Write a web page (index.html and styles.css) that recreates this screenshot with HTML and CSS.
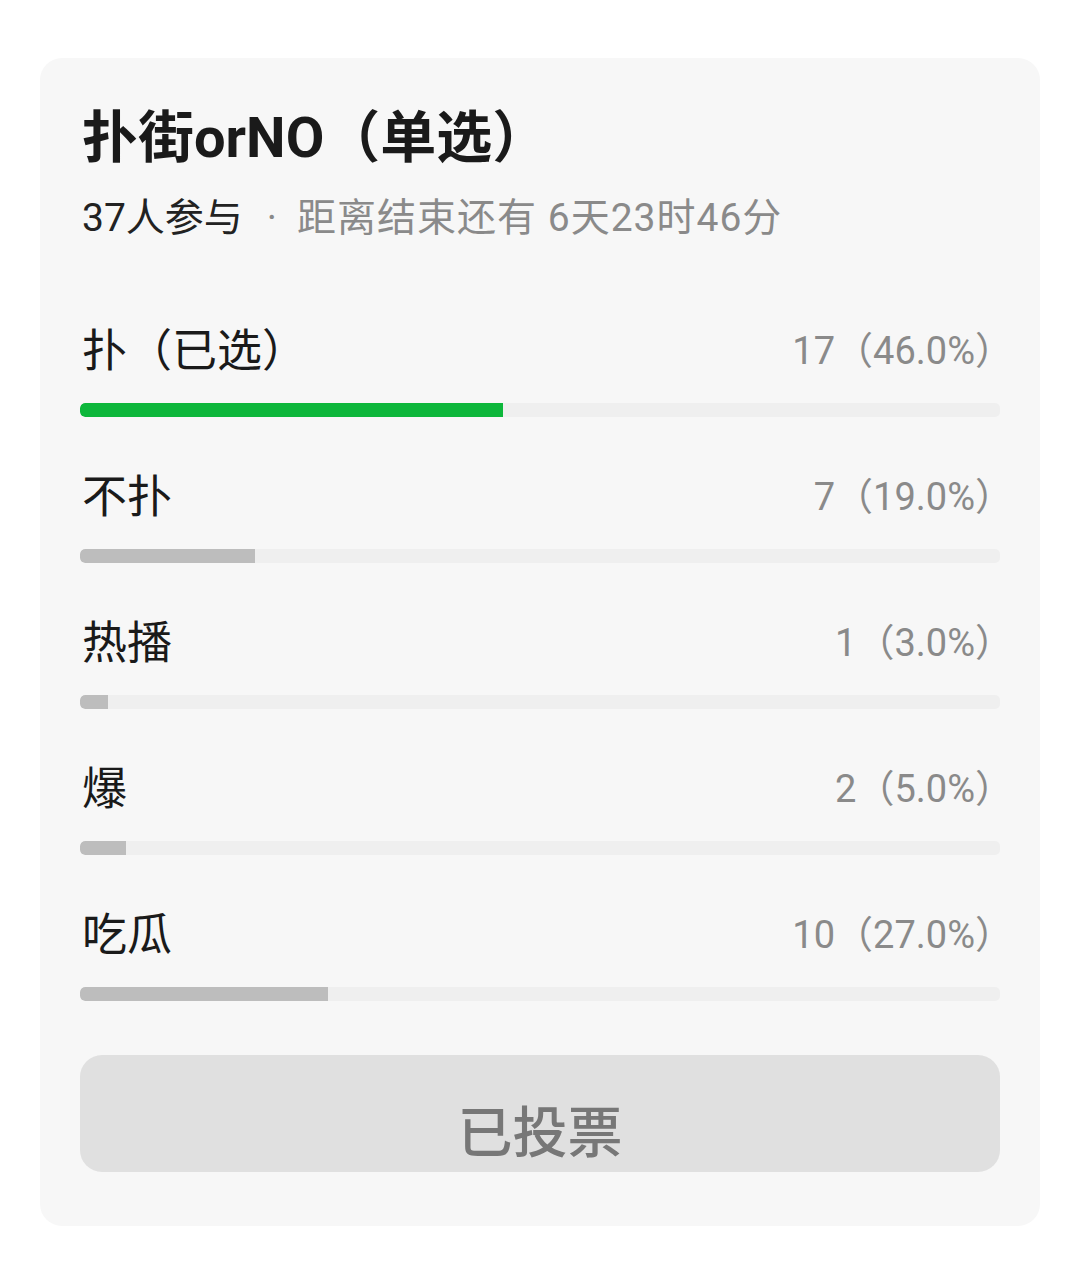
FILE: index.html
```html
<!DOCTYPE html>
<html>
<head>
    <title>投票</title>
    <link rel="stylesheet" href="styles.css">
</head>
<body>
    <div class="card">
        <h1 class="title">扑街orNO（单选）</h1>
        <p class="meta"><span class="count">37人参与</span><span class="dot">·</span><span class="remain">距离结束还有 6天23时46分</span></p>

        <div class="options">
            <div class="option">
                <div class="option-head">
                    <span class="label">扑（已选）</span>
                    <span class="value">17（46.0%）</span>
                </div>
                <div class="track"><div class="fill chosen" style="width: 46%;"></div></div>
            </div>
            <div class="option">
                <div class="option-head">
                    <span class="label">不扑</span>
                    <span class="value">7（19.0%）</span>
                </div>
                <div class="track"><div class="fill" style="width: 19%;"></div></div>
            </div>
            <div class="option">
                <div class="option-head">
                    <span class="label">热播</span>
                    <span class="value">1（3.0%）</span>
                </div>
                <div class="track"><div class="fill" style="width: 3%;"></div></div>
            </div>
            <div class="option">
                <div class="option-head">
                    <span class="label">爆</span>
                    <span class="value">2（5.0%）</span>
                </div>
                <div class="track"><div class="fill" style="width: 5%;"></div></div>
            </div>
            <div class="option">
                <div class="option-head">
                    <span class="label">吃瓜</span>
                    <span class="value">10（27.0%）</span>
                </div>
                <div class="track"><div class="fill" style="width: 27%;"></div></div>
            </div>
        </div>

        <button class="voted" disabled>已投票</button>
    </div>
</body>
</html>
```

FILE: styles.css
```css
body {
    margin: 0;
    background: #fff;
    font-family: Roboto, "Noto Sans CJK SC", sans-serif;
}

.card {
    width: 1000px;
    box-sizing: border-box;
    margin: 58px 0 0 40px;
    padding: 50px 40px 54px 40px;
    background: #f7f7f7;
    border-radius: 22px;
}

.title {
    margin: 0 0 28px 0;
    padding-left: 2px;
    font-size: 56px;
    line-height: 60px;
    font-weight: 700;
    color: #1a1a1a;
}

.meta {
    margin: 0;
    padding-left: 2px;
    font-size: 39px;
    line-height: 44px;
    color: #8a8a8a;
}

.count {
    color: #222;
}

.dot {
    margin: 0 20px 0 24px;
}

.remain {
    letter-spacing: 1px;
}

.options {
    margin-top: 77px;
    display: flex;
    flex-direction: column;
    gap: 46px;
}

.option-head {
    display: flex;
    justify-content: space-between;
    align-items: center;
    height: 60px;
    padding: 0 0 0 2px;
}

.label {
    font-size: 45px;
    color: #1a1a1a;
}

.value {
    margin-right: -13px;
    font-size: 38px;
    color: #8a8a8a;
}

.track {
    margin-top: 26px;
    height: 14px;
    background: #efefef;
    border-radius: 5px;
    overflow: hidden;
}

.fill {
    height: 100%;
    background: #bdbdbd;
    border-radius: 5px 0 0 5px;
}

.fill.chosen {
    background: #0db73b;
}

.voted {
    display: block;
    width: 100%;
    height: 117px;
    margin-top: 54px;
    border: none;
    border-radius: 22px;
    background: #e0e0e0;
    color: #777;
    font-family: "Noto Sans CJK SC", sans-serif;
    font-size: 55px;
    font-weight: 500;
    padding-top: 30px;
}
```
